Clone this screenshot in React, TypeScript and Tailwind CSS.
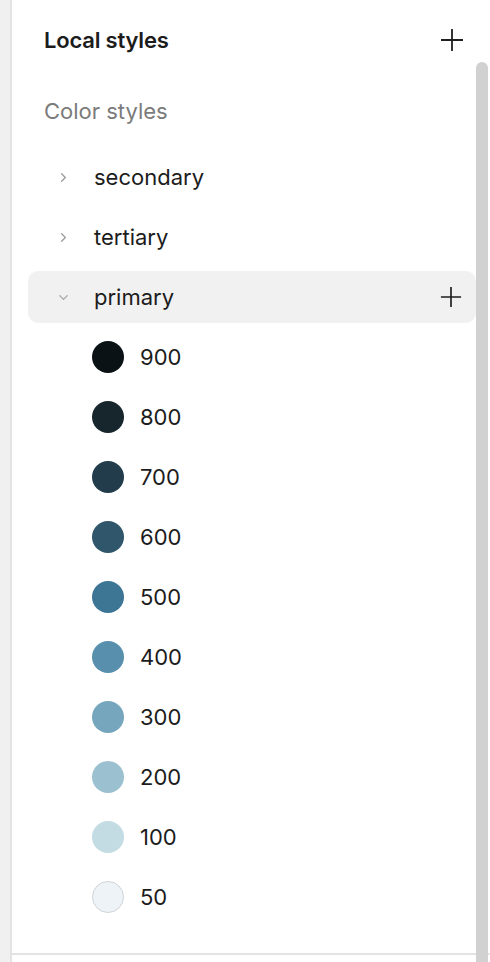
import { ChevronRight, ChevronDown } from 'lucide-react'

const shades = [
  { name: '900', color: '#0b1216', border: false },
  { name: '800', color: '#17252d', border: false },
  { name: '700', color: '#223c4c', border: false },
  { name: '600', color: '#2f566b', border: false },
  { name: '500', color: '#3d7594', border: false },
  { name: '400', color: '#578fac', border: false },
  { name: '300', color: '#76a6bd', border: false },
  { name: '200', color: '#9bc0d0', border: false },
  { name: '100', color: '#c3dbe3', border: false },
  { name: '50', color: '#eef3f7', border: true },
]

function PlusIcon({ size }: { size: number }) {
  return (
    <svg width={size} height={size} viewBox="0 0 24 24" fill="none" stroke="#1e1e1e" strokeWidth={1.8}>
      <path d="M12 1v22M1 12h22" />
    </svg>
  )
}

export default function App() {
  return (
    <div
      className="relative flex h-[962px] w-[490px] overflow-hidden bg-white text-[#1c1c1c]"
      style={{ fontFamily: 'Inter, "Noto Sans", sans-serif' }}
    >
      {/* Left gutter */}
      <div className="w-[10px] shrink-0 bg-[#f0f0f0] border-r-2 border-[#e3e3e3] box-content" />

      {/* Panel */}
      <div className="flex flex-1 flex-col">
        <div className="h-[955px] border-b-2 border-[#e3e3e3] pr-[14px]">
          {/* Header */}
          <div className="flex h-[80px] items-center justify-between pl-[32px] pr-[12px]">
            <span className="text-[22px] font-semibold tracking-[-0.2px]">Local styles</span>
            <PlusIcon size={24} />
          </div>

          <div className="flex h-[62px] items-center pl-[32px]">
            <span className="text-[22px] text-[#7b7b7b]">Color styles</span>
          </div>

          <div className="mt-[5px]">
            {['secondary', 'tertiary'].map((g) => (
              <div key={g} className="flex h-[60px] items-center pl-[44px]">
                <ChevronRight size={15} strokeWidth={2} className="text-[#9a9a9a]" />
                <span className="ml-[23px] text-[22px]">{g}</span>
              </div>
            ))}

            <div className="flex h-[60px] items-center pl-[16px]">
              <div className="flex h-[52px] flex-1 items-center justify-between rounded-[10px] bg-[#f1f1f1] pl-[28px] pr-[14px]">
                <div className="flex items-center">
                  <ChevronDown size={15} strokeWidth={2} className="text-[#a4a4a4]" />
                  <span className="ml-[23px] text-[22px]">primary</span>
                </div>
                <PlusIcon size={22} />
              </div>
            </div>

            {shades.map((s) => (
              <div key={s.name} className="flex h-[60px] items-center pl-[80px]">
                <div
                  className={`h-[32px] w-[32px] rounded-full ${s.border ? 'border border-[#cfd4d8]' : ''}`}
                  style={{ backgroundColor: s.color }}
                />
                <span className="ml-[16px] text-[22px]">{s.name}</span>
              </div>
            ))}
          </div>
        </div>
      </div>

      {/* Scrollbar thumb */}
      <div className="absolute right-[2px] top-[62px] h-[920px] w-[12px] rounded-t-full bg-[#d1d1d1]" />
    </div>
  )
}
